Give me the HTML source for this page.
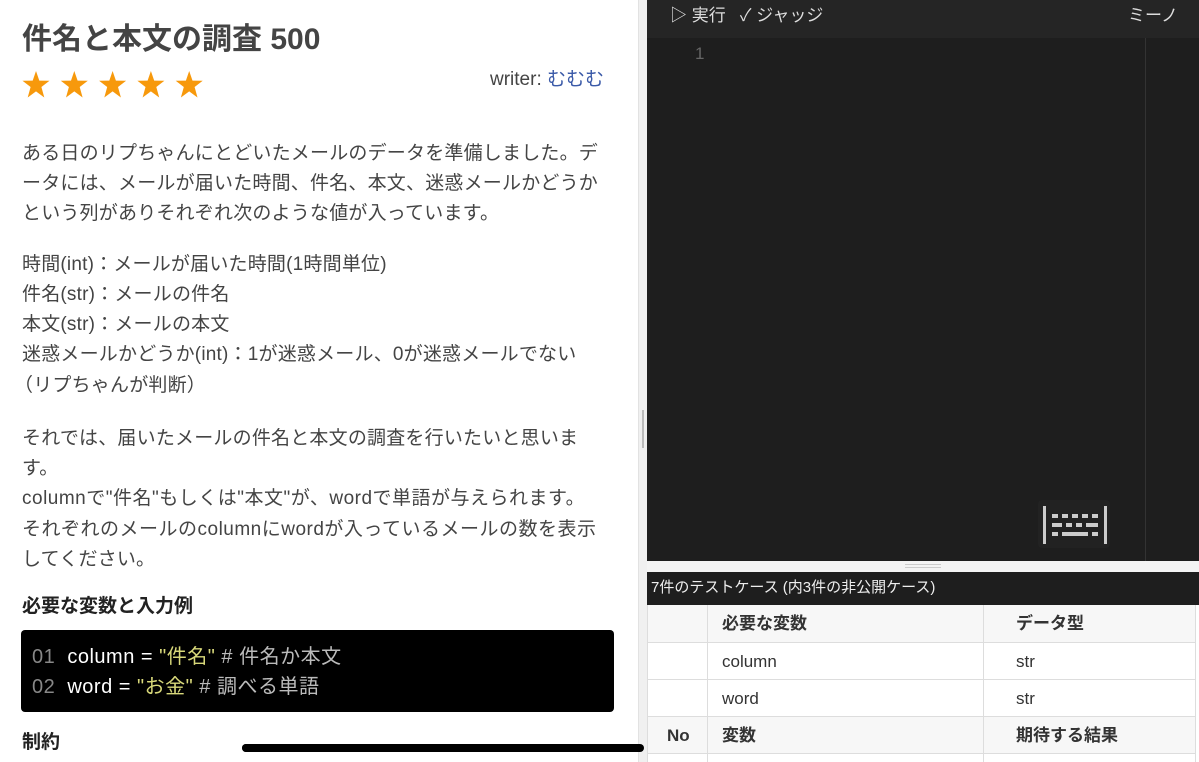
<!DOCTYPE html>
<html><head><meta charset="utf-8"><style>
*{margin:0;padding:0;box-sizing:border-box}
body{width:1199px;height:762px;overflow:hidden;background:#fff;font-family:"Liberation Sans","Noto Sans CJK JP",sans-serif;color:#333;position:relative}
.a{position:absolute;white-space:nowrap}
.l{font-size:19px;color:#444;left:22px;line-height:30px;letter-spacing:0.2px}
.td{position:absolute;font-size:17px;color:#333;line-height:37px}
</style></head><body>
<div class="a" style="left:22px;top:20px;font-size:30px;font-weight:bold;color:#444;line-height:40px">件名と本文の調査 500</div>
<svg class="a" style="left:22px;top:71px" width="190" height="28" viewBox="0 0 190 28" fill="#f7990c">
<g id="s"><polygon points="14,0 17.3,9.6 27.5,9.8 19.4,16 22.3,26.5 14,20.4 5.7,26.5 8.6,16 0.5,9.8 10.7,9.6"/></g>
<use href="#s" x="38.3"/><use href="#s" x="76.6"/><use href="#s" x="114.9"/><use href="#s" x="153.2"/>
</svg>
<div class="a" style="left:490px;top:66px;font-size:19px;color:#444;line-height:28px">writer: <span style="color:#3b5aa8">むむむ</span></div>
<div class="a l" style="top:139px">ある日のリプちゃんにとどいたメールのデータを準備しました。デ</div>
<div class="a l" style="top:169px">ータには、メールが届いた時間、件名、本文、迷惑メールかどうか</div>
<div class="a l" style="top:199px">という列がありそれぞれ次のような値が入っています。</div>
<div class="a l" style="top:250px">時間(int)：メールが届いた時間(1時間単位)</div>
<div class="a l" style="top:280px">件名(str)：メールの件名</div>
<div class="a l" style="top:310px">本文(str)：メールの本文</div>
<div class="a l" style="top:340px">迷惑メールかどうか(int)：1が迷惑メール、0が迷惑メールでない</div>
<div class="a l" style="top:371px;left:14px">（リプちゃんが判断）</div>
<div class="a l" style="top:424px">それでは、届いたメールの件名と本文の調査を行いたいと思いま</div>
<div class="a l" style="top:454px">す。</div>
<div class="a l" style="top:484px;letter-spacing:0.5px">columnで"件名"もしくは"本文"が、wordで単語が与えられます。</div>
<div class="a l" style="top:515px;letter-spacing:0.5px">それぞれのメールのcolumnにwordが入っているメールの数を表示</div>
<div class="a l" style="top:545px">してください。</div>
<div class="a" style="left:22px;top:592px;font-size:19px;font-weight:bold;color:#222;line-height:30px">必要な変数と入力例</div>
<div class="a" style="left:21px;top:630px;width:593px;height:82px;background:#000;border-radius:4px"></div>
<div class="a" style="left:32px;top:642px;font-size:20px;line-height:30px;color:#fff;letter-spacing:0.5px"><span style="color:#888">01</span>&nbsp; column = <span style="color:#d8d87a">"件名"</span> <span style="color:#bbb"># 件名か本文</span></div>
<div class="a" style="left:32px;top:672px;font-size:20px;line-height:30px;color:#fff;letter-spacing:0.5px"><span style="color:#888">02</span>&nbsp; word = <span style="color:#d8d87a">"お金"</span> <span style="color:#bbb"># 調べる単語</span></div>
<div class="a" style="left:22px;top:728px;font-size:19px;font-weight:bold;color:#222;line-height:30px">制約</div>
<div class="a" style="left:242px;top:744px;width:402px;height:8px;background:#000;border-radius:4px"></div>
<div class="a" style="left:638px;top:0;width:10px;height:762px;background:#f0f0f0;border-left:1px solid #e2e2e2"></div>
<div class="a" style="left:642px;top:410px;width:2px;height:38px;background:#bbb"></div>
<div class="a" style="left:242px;top:744px;width:402px;height:8px;background:#000;border-radius:4px"></div>
<div class="a" style="left:647px;top:0;width:552px;height:38px;background:#252525"></div>
<div class="a" style="left:670px;top:4px;font-size:17px;color:#ddd;line-height:24px">▷ 実行 &nbsp; ✓ ジャッジ</div>
<div class="a" style="left:1128px;top:4px;font-size:17px;color:#ddd;line-height:24px">ミーノ</div>
<div class="a" style="left:647px;top:38px;width:552px;height:523px;background:#1e1e1e"></div>
<div class="a" style="left:1145px;top:38px;width:1px;height:523px;background:#333"></div>
<div class="a" style="left:695px;top:42px;font-size:17px;color:#666;line-height:24px">1</div>
<div class="a" style="left:1038px;top:500px;width:72px;height:48px;background:#222;border-radius:4px"></div>
<svg class="a" style="left:1040px;top:502px" width="70" height="44" viewBox="0 0 70 44" fill="#ccc">
<rect x="3" y="4" width="3" height="38"/><rect x="64" y="4" width="3" height="38"/>
<rect x="12" y="12" width="6" height="4"/><rect x="22" y="12" width="6" height="4"/><rect x="32" y="12" width="6" height="4"/><rect x="42" y="12" width="6" height="4"/><rect x="52" y="12" width="6" height="4"/>
<rect x="12" y="21" width="10" height="4"/><rect x="26" y="21" width="6" height="4"/><rect x="36" y="21" width="6" height="4"/><rect x="46" y="21" width="12" height="4"/>
<rect x="12" y="30" width="6" height="4"/><rect x="22" y="30" width="26" height="4"/><rect x="52" y="30" width="6" height="4"/>
</svg>
<div class="a" style="left:647px;top:561px;width:552px;height:11px;background:#f4f4f4"></div>
<div class="a" style="left:905px;top:564px;width:36px;height:4px;border-top:1px solid #ccc;border-bottom:1px solid #ccc"></div>
<div class="a" style="left:647px;top:572px;width:552px;height:33px;background:#1e1e1e"></div>
<div class="a" style="left:651px;top:576px;font-size:15px;color:#eee;line-height:24px">7件のテストケース (内3件の非公開ケース)</div>
<div class="a" style="left:647px;top:605px;width:549px;height:38px;background:#f7f7f7;border-bottom:1px solid #ddd"></div>
<div class="a" style="left:647px;top:643px;width:549px;height:37px;background:#fff;border-bottom:1px solid #ddd"></div>
<div class="a" style="left:647px;top:680px;width:549px;height:37px;background:#fff;border-bottom:1px solid #ddd"></div>
<div class="a" style="left:647px;top:717px;width:549px;height:37px;background:#f7f7f7;border-bottom:1px solid #ddd"></div>
<div class="a" style="left:647px;top:605px;width:1px;height:157px;background:#ddd"></div>
<div class="a" style="left:707px;top:605px;width:1px;height:157px;background:#ddd"></div>
<div class="a" style="left:983px;top:605px;width:1px;height:157px;background:#ddd"></div>
<div class="a" style="left:1195px;top:605px;width:1px;height:157px;background:#ddd"></div>
<div class="td" style="left:722px;top:605px;font-weight:bold">必要な変数</div>
<div class="td" style="left:1016px;top:605px;font-weight:bold">データ型</div>
<div class="td" style="left:722px;top:643px">column</div>
<div class="td" style="left:1016px;top:643px">str</div>
<div class="td" style="left:722px;top:680px">word</div>
<div class="td" style="left:1016px;top:680px">str</div>
<div class="td" style="left:667px;top:717px;font-weight:bold">No</div>
<div class="td" style="left:722px;top:717px;font-weight:bold">変数</div>
<div class="td" style="left:1016px;top:717px;font-weight:bold">期待する結果</div>
</body></html>
